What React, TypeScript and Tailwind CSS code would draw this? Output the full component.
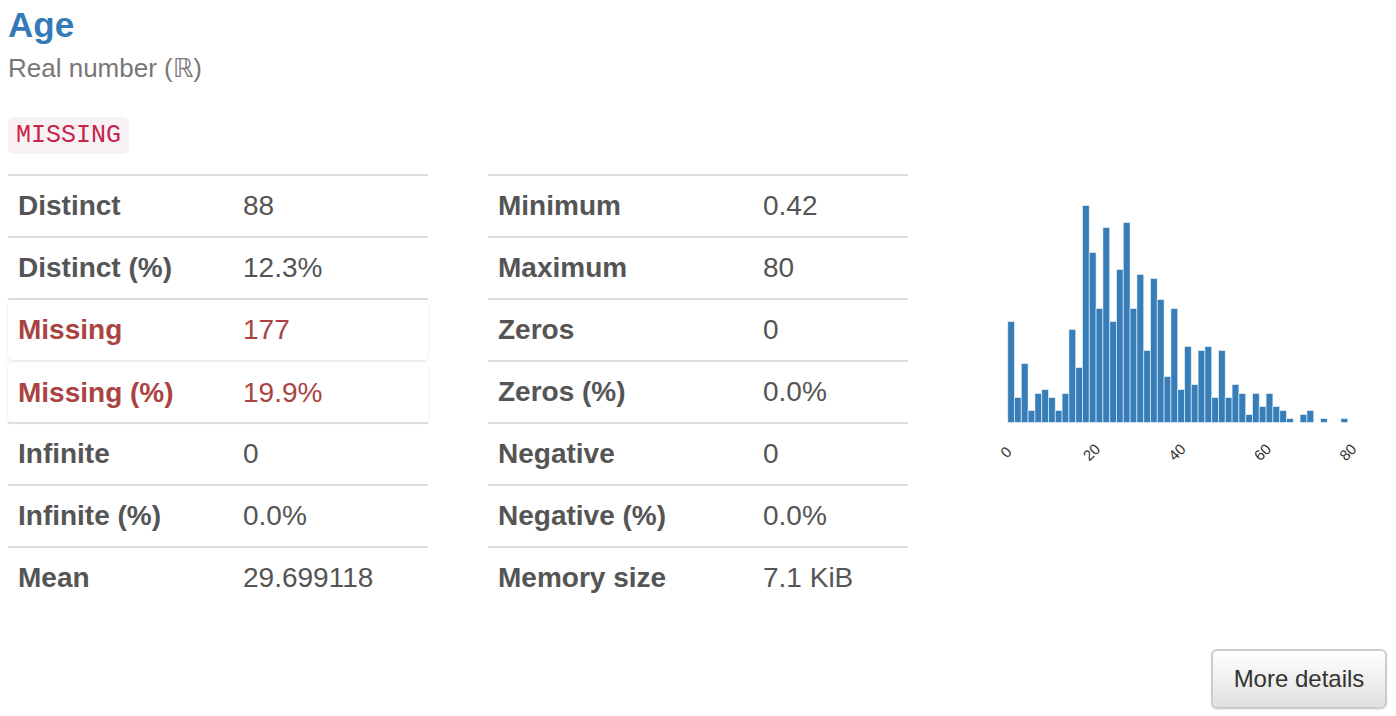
const font = { fontFamily: '"Liberation Sans", Arial, "DejaVu Sans", sans-serif' };

type Row = { label: string; value: string; alert?: "first" | "second" };

const leftRows: Row[] = [
  { label: "Distinct", value: "88" },
  { label: "Distinct (%)", value: "12.3%" },
  { label: "Missing", value: "177", alert: "first" },
  { label: "Missing (%)", value: "19.9%", alert: "second" },
  { label: "Infinite", value: "0" },
  { label: "Infinite (%)", value: "0.0%" },
  { label: "Mean", value: "29.699118" },
];

const rightRows: Row[] = [
  { label: "Minimum", value: "0.42" },
  { label: "Maximum", value: "80" },
  { label: "Zeros", value: "0" },
  { label: "Zeros (%)", value: "0.0%" },
  { label: "Negative", value: "0" },
  { label: "Negative (%)", value: "0.0%" },
  { label: "Memory size", value: "7.1 KiB" },
];

// bar heights in px, read off the rendered histogram
const bars = [
  101, 25, 59, 12, 29, 33, 25, 12, 29, 93, 55, 217, 170, 114, 195, 101, 153,
  200, 114, 148, 72, 144, 123, 46, 114, 33, 76, 38, 72, 76, 25, 72, 25, 38, 29,
  8, 29, 16, 29, 16, 12, 4, 0, 8, 12, 0, 4, 0, 0, 4,
];

const StatsTable = ({ rows, labelWidth }: { rows: Row[]; labelWidth: string }) => {
  return (
    <div className="w-[420px] shrink-0">
      {rows.map((row) => {
        const red = row.alert !== undefined;
        const cells = (
          <div className={`grid h-full items-center ${labelWidth}`}>
            <div className={`pl-[10px] font-bold ${red ? "text-[#a94442]" : "text-[#555]"}`}>
              {row.label}
            </div>
            <div className={`pl-[10px] ${red ? "text-[#a94442]" : "text-[#555]"}`}>
              {row.value}
            </div>
          </div>
        );

        if (row.alert === "first") {
          return (
            <div key={row.label} className="h-[62px] border-t-2 border-[#ddd]">
              <div className="h-[60px] rounded-[4px] bg-white shadow-[0_1px_3px_rgba(0,0,0,0.12)]">
                {cells}
              </div>
            </div>
          );
        }
        if (row.alert === "second") {
          return (
            <div key={row.label} className="h-[62px] pt-[3px]">
              <div className="h-[59px] rounded-[4px] bg-white shadow-[0_1px_3px_rgba(0,0,0,0.12)]">
                {cells}
              </div>
            </div>
          );
        }
        return (
          <div key={row.label} className="h-[62px] border-t-2 border-[#ddd]">
            {cells}
          </div>
        );
      })}
    </div>
  );
};

const Histogram = () => {
  const base = 248.5;
  const x0 = 39.7;
  const pitch = 6.8;
  const ticks = [0, 20, 40, 60, 80];
  return (
    <svg width="412" height="300" viewBox="0 0 412 300">
      {bars.map((h, i) =>
        h > 0 ? (
          <rect
            key={i}
            x={x0 + i * pitch}
            y={base - h}
            width={pitch}
            height={h}
            fill="#377eb8"
            stroke="#ffffff"
            strokeOpacity={0.55}
            strokeWidth={1}
          />
        ) : null
      )}
      {ticks.map((t) => {
        const x = 37.9 + t * 4.273;
        const y = 278;
        return (
          <text
            key={t}
            x={x}
            y={y}
            fontSize="15"
            fill="#333"
            textAnchor="middle"
            dominantBaseline="central"
            transform={`rotate(-45 ${x} ${y})`}
            style={font}
          >
            {t}
          </text>
        );
      })}
    </svg>
  );
};

export default function App() {
  return (
    <div className="min-h-[716px] w-[1396px] bg-white px-2 text-[28px]" style={font}>
      <div className="mt-[5px] text-[35px] leading-[40px] font-bold text-[#337ab7]">Age</div>
      <div className="mt-[8px] text-[26px] leading-[30px] text-[#777]">Real number (ℝ)</div>
      <div className="mt-[34px] flex">
        <code
          className="flex h-[37px] items-center rounded-[6px] bg-[#f9f2f4] px-2 text-[25px] text-[#c7254e]"
          style={{ fontFamily: '"Liberation Mono", "DejaVu Sans Mono", monospace' }}
        >
          MISSING
        </code>
      </div>

      <div className="mt-[20px] flex">
        <StatsTable rows={leftRows} labelWidth="grid-cols-[225px_1fr]" />
        <div className="ml-[60px] shrink-0">
          <StatsTable rows={rightRows} labelWidth="grid-cols-[265px_1fr]" />
        </div>
        <div className="ml-[60px] shrink-0">
          <Histogram />
        </div>
      </div>

      <div className="mt-[41px] flex justify-end pr-[1px]">
        <button className="h-[60px] w-[176px] rounded-[6px] border-2 border-[#ccc] bg-gradient-to-b from-white to-[#e0e0e0] text-[24px] text-[#333] shadow-[0_1px_2px_rgba(0,0,0,0.08)]">
          More details
        </button>
      </div>
    </div>
  );
}
